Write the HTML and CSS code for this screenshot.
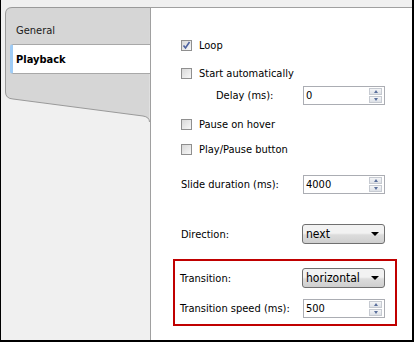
FILE: index.html
```html
<!DOCTYPE html>
<html lang="en">
<head>
  <meta charset="UTF-8" />
  <title>Slider settings</title>
  <link rel="stylesheet" href="styles.css">
</head>
<body>
  <div class="window">
    <div class="sidebar">
      <svg class="tab-shape" width="149" height="130" viewBox="0 0 149 130">
        <path d="M149 7.5 H11 Q4.5 7.5 4.5 14 V92 Q4.5 98.5 12 99 L142 116 Q148.5 117 148.5 122" fill="#d6d6d6" stroke="#9a9a9a" />
      </svg>
      <div class="tabs">
        <div class="tab">General</div>
        <div class="tab active">Playback</div>
      </div>
    </div>

    <div class="panel">
      <label class="row check-row loop">
        <span class="checkbox checked">
          <svg width="9" height="9" viewBox="0 0 9 9"><path d="M1.5 4.5 L3.5 7 L7.5 1" fill="none" stroke="#4d62a0" stroke-width="1.6"/></svg>
        </span>
        Loop
      </label>
      <label class="row check-row start">
        <span class="checkbox"></span>
        Start automatically
      </label>
      <div class="row field delay">
        <span class="label indent">Delay (ms):</span>
        <div class="spin"><span class="value">0</span><span class="arrows"><i class="up"></i><i class="down"></i></span></div>
      </div>
      <label class="row check-row pause">
        <span class="checkbox"></span>
        Pause on hover
      </label>
      <label class="row check-row play">
        <span class="checkbox"></span>
        Play/Pause button
      </label>
      <div class="row field slide">
        <span class="label">Slide duration (ms):</span>
        <div class="spin"><span class="value">4000</span><span class="arrows"><i class="up"></i><i class="down"></i></span></div>
      </div>
      <div class="row field direction">
        <span class="label">Direction:</span>
        <div class="select"><span class="value">next</span><span class="caret"></span></div>
      </div>

      <div class="highlight">
        <div class="row field transition">
          <span class="label">Transition:</span>
          <div class="select"><span class="value">horizontal</span><span class="caret"></span></div>
        </div>
        <div class="row field speed">
          <span class="label">Transition speed (ms):</span>
          <div class="spin"><span class="value">500</span><span class="arrows"><i class="up"></i><i class="down"></i></span></div>
        </div>
      </div>
    </div>
  </div>
</body>
</html>
```

FILE: styles.css
```css
body {
  margin: 0;
  background: #fff;
  font-family: "DejaVu Sans Condensed", "DejaVu Sans", sans-serif;
  font-stretch: condensed;
  font-size: 11px;
  color: #000;
}

.window {
  width: 411px;
  height: 340px;
  display: flex;
  border-left: 1px solid #000;
  border-right: 2px solid #000;
  border-bottom: 2px solid #000;
  background: #f0f0f0;
}

.sidebar {
  position: relative;
  width: 149px;
  flex-shrink: 0;
  padding-top: 15px;
}

.tab-shape {
  position: absolute;
  left: 0;
  top: 0;
}

.tabs {
  position: relative;
  margin-left: 9px;
}

.tab {
  height: 29px;
  line-height: 31px;
  padding-left: 6px;
  color: #1a1a1a;
}

.tab.active {
  height: 28px;
  line-height: 29px;
  background: #fff;
  font-weight: bold;
  color: #000;
  border-top: 1px solid #a8a8a8;
  border-bottom: 1px solid #a8a8a8;
  border-left: 3px solid #9ecbf5;
  border-radius: 3px 0 0 3px;
  padding-left: 3px;
}

.panel {
  flex: 1;
  margin-top: 7px;
  background: #fff;
  border-top: 1px solid #a0a0a0;
  border-left: 1px solid #a0a0a0;
  padding-left: 30px;
}

.row {
  display: flex;
  align-items: center;
  height: 20px;
}

.check-row { gap: 7px; }
.loop { margin-top: 27px; }
.start { margin-top: 8px; }
.delay { margin-top: 2px; }
.pause { margin-top: 9px; }
.play { margin-top: 5px; }
.slide { margin-top: 15px; }
.direction { margin-top: 30px; }

.checkbox {
  width: 9px;
  height: 9px;
  border: 1px solid #8f8f8f;
  background: linear-gradient(135deg, #d8d8d8, #f7f7f7);
  display: flex;
  align-items: center;
  justify-content: center;
}

.label {
  width: 122px;
  flex-shrink: 0;
}

.label.indent {
  padding-left: 35px;
  width: 87px;
}

.spin {
  width: 78px;
  height: 17px;
  border: 1px solid #abadb3;
  display: flex;
  align-items: center;
  justify-content: space-between;
  padding-left: 2px;
  box-sizing: content-box;
}

.arrows {
  display: flex;
  flex-direction: column;
  gap: 1px;
  margin-right: 2px;
}

.arrows i {
  width: 13px;
  height: 7px;
  border: 1px solid #c6cad1;
  background: linear-gradient(#f4f5f7, #dde1e7);
  position: relative;
  box-sizing: border-box;
}

.arrows i::after {
  content: "";
  position: absolute;
  left: 4px;
  border-left: 2px solid transparent;
  border-right: 2px solid transparent;
}

.arrows .up::after { top: 1px; border-bottom: 3px solid #5a6f9c; }
.arrows .down::after { top: 1px; border-top: 3px solid #5a6f9c; }

.select {
  width: 78px;
  height: 18px;
  border: 1px solid #707070;
  border-radius: 3px;
  background: linear-gradient(#f2f2f2 45%, #dcdcdc 55%, #cfcfcf);
  display: flex;
  align-items: center;
  justify-content: space-between;
  padding-left: 3px;
  box-sizing: content-box;
  margin-left: -1px;
  font-size: 12px;
}

.caret {
  margin-right: 5px;
  border-left: 4px solid transparent;
  border-right: 4px solid transparent;
  border-top: 4px solid #000;
}

.highlight {
  margin: 15px 0 0 -8px;
  height: 63px;
  border: 2px solid #c00000;
  padding-left: 5px;
  box-sizing: content-box;
  width: 215px;
}

.transition { margin-top: 7px; }
.speed { margin-top: 10px; }

.highlight .label { width: 123px; }
```
